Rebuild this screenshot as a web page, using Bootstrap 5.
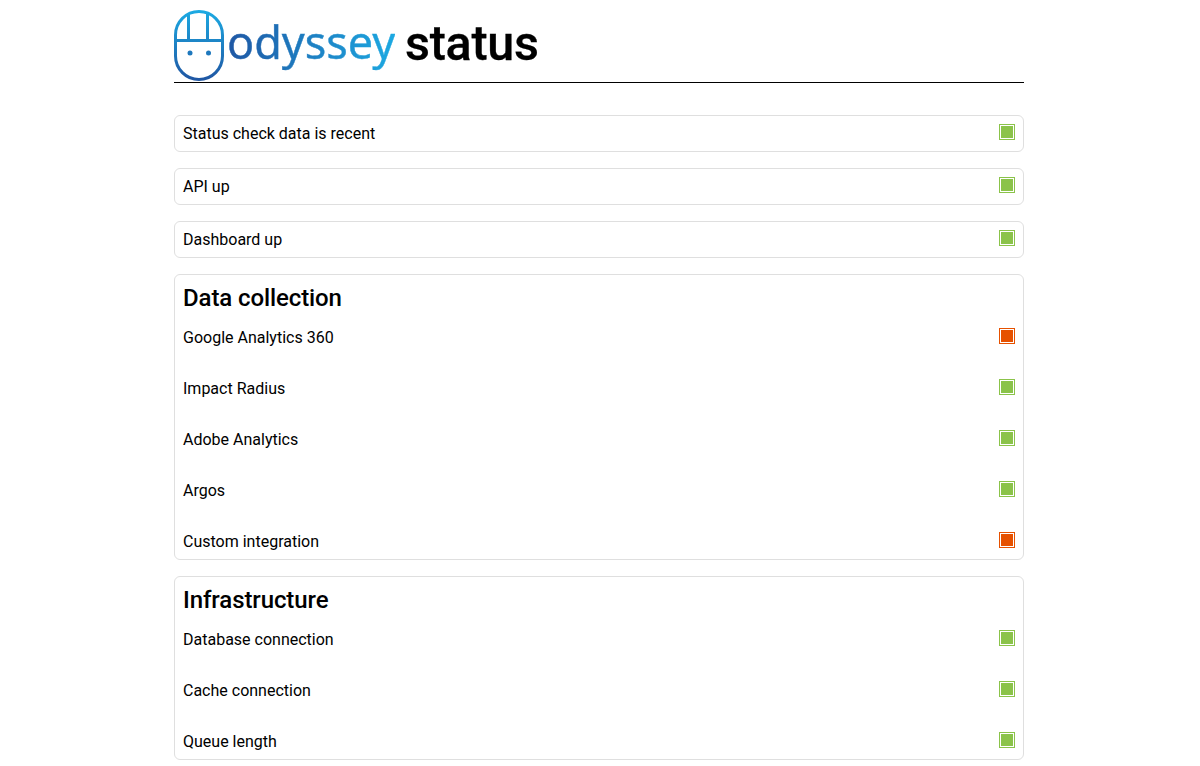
<!doctype html>
<html lang="en"><head><meta charset="utf-8"><title>Odyssey status</title>
<link rel="stylesheet" href="https://cdn.jsdelivr.net/npm/bootstrap@5.3.0/dist/css/bootstrap.min.css">
<style>
body{font-family:Roboto,sans-serif;color:#000;padding-right:2px;overflow:hidden}
.page-wrap{width:850px}
.brand-head{height:83px;border-bottom:1px solid #000;padding-top:10px;margin-bottom:32px}
.brand-mark{width:50px;height:72px;flex:none}
.brand-word{font-family:"Noto Sans",sans-serif;font-size:45px;line-height:63px;font-weight:400;background:linear-gradient(90deg,#1f57a4,#1ca9e2);-webkit-background-clip:text;background-clip:text;color:transparent;margin-left:3px;letter-spacing:-.05px;-webkit-text-stroke:.4px transparent}
.brand-status{font-size:48.5px;font-weight:500;line-height:68px;margin-left:10px;letter-spacing:-.3px;-webkit-text-stroke:.3px #000}
.stat-box{border:1px solid #dfdfdf;border-radius:6px;padding:8px;margin-bottom:16px;box-sizing:content-box}
.stat-line{height:19px;line-height:19px}
.stat-group .stat-line{height:51px;line-height:26px}
.stat-group .stat-line:last-child{height:22px}
.stat-group .sq{margin-top:3px}
.stat-group h2{font-size:24px;font-weight:500;line-height:30px;margin:0 0 12px;letter-spacing:-.1px}
.sq{width:16px;height:16px;border:1px solid;padding:1px;background-clip:content-box;flex:none}
.sq-ok{border-color:#8bc34a;background-color:#8bc34a}
.sq-bad{border-color:#e65100;background-color:#e65100}
</style></head><body>
<div class="page-wrap mx-auto">
<div class="brand-head d-flex align-items-start">
<svg class="brand-mark" viewBox="0 0 50 72" fill="none"><defs><linearGradient id="lg" x1="0" y1="0" x2="0" y2="1"><stop offset="0" stop-color="#1ca9e2"/><stop offset="1" stop-color="#1f57a4"/></linearGradient><linearGradient id="lh" gradientUnits="userSpaceOnUse" x1="0" y1="0" x2="0" y2="72"><stop offset="0" stop-color="#1ca9e2"/><stop offset="1" stop-color="#1f57a4"/></linearGradient></defs>
<rect x="1.5" y="1.5" width="47" height="68" rx="23.5" stroke="url(#lg)" stroke-width="3"/><path d="M1.5 30.5H48.5M14.5 3V30M33.5 3V30" stroke="url(#lh)" stroke-width="3"/><circle cx="16" cy="43" r="2.5" fill="#1e78bd"/><circle cx="34.5" cy="43" r="2.5" fill="#1e78bd"/></svg>
<span class="brand-word">odyssey</span><span class="brand-status">status</span>
</div>
<div class="stat-box d-flex justify-content-between stat-line"><span>Status check data is recent</span><span class="sq sq-ok"></span></div>
<div class="stat-box d-flex justify-content-between stat-line"><span>API up</span><span class="sq sq-ok"></span></div>
<div class="stat-box d-flex justify-content-between stat-line"><span>Dashboard up</span><span class="sq sq-ok"></span></div>
<div class="stat-box stat-group">
<h2>Data collection</h2>
<div class="d-flex justify-content-between stat-line"><span>Google Analytics 360</span><span class="sq sq-bad"></span></div>
<div class="d-flex justify-content-between stat-line"><span>Impact Radius</span><span class="sq sq-ok"></span></div>
<div class="d-flex justify-content-between stat-line"><span>Adobe Analytics</span><span class="sq sq-ok"></span></div>
<div class="d-flex justify-content-between stat-line"><span>Argos</span><span class="sq sq-ok"></span></div>
<div class="d-flex justify-content-between stat-line"><span>Custom integration</span><span class="sq sq-bad"></span></div>
</div>
<div class="stat-box stat-group">
<h2>Infrastructure</h2>
<div class="d-flex justify-content-between stat-line"><span>Database connection</span><span class="sq sq-ok"></span></div>
<div class="d-flex justify-content-between stat-line"><span>Cache connection</span><span class="sq sq-ok"></span></div>
<div class="d-flex justify-content-between stat-line"><span>Queue length</span><span class="sq sq-ok"></span></div>
</div>
</div>
</body></html>
